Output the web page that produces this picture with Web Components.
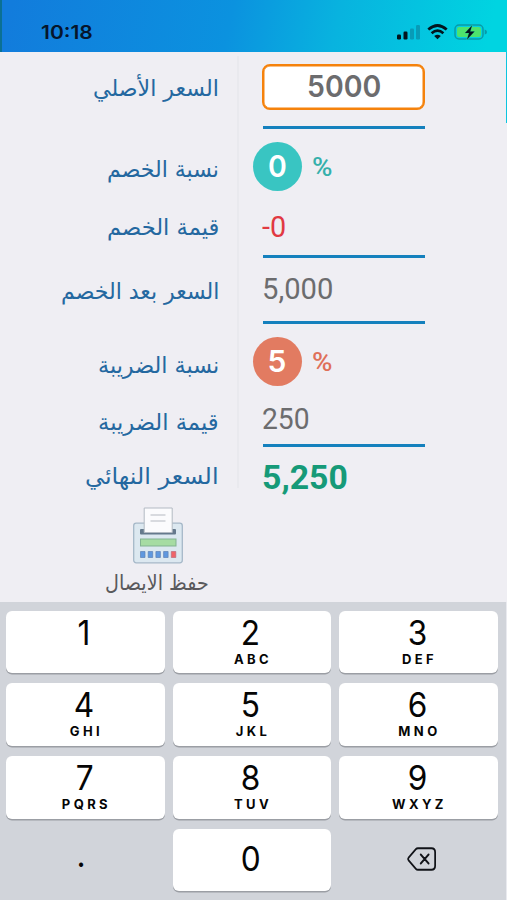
<!DOCTYPE html>
<html lang="ar">
<head>
<meta charset="utf-8">
<title>حاسبة الخصم والضريبة</title>
<style>
html,body{margin:0;height:900px;overflow:hidden;background:#efeef3}
</style>
</head>
<body>
<discount-app></discount-app>
<script>
const make = (name, html, ready) => customElements.define(name, class extends HTMLElement {
  connectedCallback() {
    if (this.shadowRoot) return;
    const t = document.createElement('template');
    t.innerHTML = typeof html === 'function' ? html(this) : html;
    this.attachShadow({mode: 'open'}).append(t.content.cloneNode(true));
    if (ready) ready(this);
  }
});

/* Text squeezed or stretched to the width given in its "w" attribute. */
make('fit-text', el => `<style>
:host{display:flex;width:${el.getAttribute('w')}px;white-space:nowrap;flex:none}
span{flex:none;transform-origin:0 50%}
</style><span><slot></slot></span>`, el => {
  const s = el.shadowRoot.querySelector('span');
  const k = +el.getAttribute('w') / s.offsetWidth;
  s.style.transform = `scaleX(${k})`;
});

make('status-bar', `<style>
:host{display:flex;box-sizing:border-box;height:52px;padding:12px 19px 0 39px;justify-content:space-between;align-items:center;
background:linear-gradient(102deg,#127cdc 2%,#0b92df 45%,#08b3df 66%,#00d4e1 96%);color:#06152b;font:600 19px Inter,sans-serif;border-left:2px solid #0b7093}
svg{display:block}
</style><fit-text w="52">10:18</fit-text>
<svg width="92" height="20" viewBox="0 0 92 20">
<g fill="#03151e"><rect x="1" y="12.5" width="4" height="5" rx="1.2"/><rect x="7.5" y="9.5" width="4" height="8" rx="1.2"/></g>
<g fill="#0a91ad"><rect x="14" y="6.5" width="4" height="11" rx="1.2" opacity=".8"/><rect x="20" y="3" width="4" height="14.500" rx="1.2" opacity=".8"/></g>
<g fill="none" stroke="#03151e" stroke-width="2.700"><path d="M32.300 7.600Q41.500-.6 50.700 7.600"/><path d="M35.600 11.200Q41.500 6.100 47.400 11.200"/></g><path d="M38.200 14Q41.500 11.300 44.800 14L41.500 17.300Z" fill="#03151e"/>
<rect x="59" y="3" width="28" height="14" rx="4" fill="none" stroke="#089aa8" stroke-width="1.500"/><rect x="61" y="5" width="24" height="10" rx="2.300" fill="#4de36c"/><path d="M88.700 7.400Q91 8 91 10t-2.300 2.600z" fill="#089aa8"/>
<path d="M76 3.500L69 11h4l-2 6.500 7.500-8h-4.300z" fill="#03151e" stroke="#2fc78b" stroke-width="1" paint-order="stroke"/>
</svg>`);

make('price-row', el => {
  const a = n => el.getAttribute(n);
  return `<style>
:host{display:grid;grid-template-columns:219px 1fr;column-gap:43px;box-sizing:border-box;height:${a('h')}px;padding-bottom:${a('pb') || 0}px;align-items:center;width:424.500px;${el.hasAttribute('line') ? 'border-bottom:3px solid #1480bd;border-image:linear-gradient(90deg,transparent 262px,#1480bd 262px) 1' : ''}}
.l{display:flex;justify-content:flex-end;direction:ltr;color:#2468a0;font:23px/30px "DejaVu Sans",sans-serif;padding-top:${a('drop') || 0}px}
.v{display:flex;align-items:center}
</style><div class="l"><fit-text w="${a('w')}">${a('label')}</fit-text></div><div class="v"><slot></slot></div>`;
});

make('price-input', `<style>
:host{display:flex;box-sizing:border-box;width:163px;height:46px;border:2.500px solid #f5820c;border-width:2.500px;border-radius:8px;background:#fff;justify-content:center;align-items:center;color:#6c6c6e;font:600 30px/40px Inter,sans-serif;box-shadow:inset 0 0 0 .5px #f5820c}
fit-text{margin-top:-2px}
</style><fit-text w="74"><slot></slot></fit-text>`);

make('percent-badge', `<style>
:host{display:flex;align-items:center;gap:10px;margin-left:-9.500px;font:500 25px/30px Roboto,sans-serif}
b{display:flex;width:49px;height:49px;border-radius:50%;background:var(--c);align-items:center;justify-content:center;color:#fff;font:600 30px/47px Inter,sans-serif}
i{font-style:normal;color:var(--t);padding-top:3px}
</style><b><fit-text w="19"><slot></slot></fit-text></b><i><fit-text w="20">%</fit-text></i>`);

make('amount-text', el => `<style>
:host{display:block;font:${el.getAttribute('wt') || 400} ${el.getAttribute('fs') || 30}px/36px Roboto,sans-serif;color:${el.getAttribute('color') || '#6c6c6e'}}
</style><fit-text w="${el.getAttribute('w')}"><slot></slot></fit-text>`);

make('save-receipt', `<style>
:host{display:flex;flex-direction:column;align-items:center;width:104px;margin:2px 0 0 105px;color:#59595c;font:21px/26px "DejaVu Sans",sans-serif}
svg{display:block;margin:0 0 6px 2px}
</style><svg width="50" height="57" viewBox="0 0 50 57">
<rect x=".7" y="16.200" width="48.600" height="39.600" rx="2.500" fill="#dce8f0" stroke="#a6b8c8" stroke-width="1.300"/>
<rect x="7" y="22" width="36" height="5.500" rx="1" fill="#65798c"/>
<path d="M11.200 1h28v24.500h-28z" fill="#fbfbfd" stroke="#b3bac3"/>
<path d="M17.500 8h15M17.500 14h15" stroke="#b6bac1" stroke-width="1.200"/>
<rect x="7.500" y="32" width="35.500" height="7" fill="#a6dca3" stroke="#83b391"/>
<g fill="#5f98df" stroke="#5d81b4" stroke-width=".7"><path d="M7.500 44.500h4.500v6h-4.500zM15.200 44.500h4.500v6h-4.500zM22.900 44.500h4.500v6h-4.500zM30.600 44.500h4.500v6h-4.500z"/><path d="M38.300 44.500h4.500v6h-4.500z" fill="#f06469" stroke="#b96b7b"/></g>
</svg><fit-text w="104">حفظ الايصال</fit-text>`);

make('key-cap', el => `<style>
:host{display:flex;flex-direction:column;align-items:center;box-sizing:border-box;border-radius:6px;color:#050505;font:400 34px/38px Inter,sans-serif;padding-top:3px;
${el.hasAttribute('flat') ? '' : 'background:#fff;box-shadow:0 1.500px 0 #9b9ea4;'}${el.hasAttribute('mid') ? 'justify-content:center;padding:0 0 2px;' : ''}}
span{transform:scaleX(.93);margin-right:2px}
small{font:700 13px/14px Inter,sans-serif;letter-spacing:3.400px;margin:0 -2.400px 0 0}
</style><span><slot></slot></span>${el.hasAttribute('sub') ? `<small>${el.getAttribute('sub')}</small>` : ''}`);

make('number-pad', `<style>
:host{display:grid;box-sizing:border-box;height:298px;grid-template-columns:repeat(3,158.500px);grid-template-rows:62px 63px 63px 62px;column-gap:8px;row-gap:10px;padding:9px 0 0 6px;background:#d1d4da;border-right:1.500px solid #e9eaef}
svg{display:block;margin-left:10px}
.dot{display:block;margin:-8px 7px 0 0}
</style>
<key-cap>1</key-cap><key-cap sub="ABC">2</key-cap><key-cap sub="DEF">3</key-cap>
<key-cap sub="GHI">4</key-cap><key-cap sub="JKL">5</key-cap><key-cap sub="MNO">6</key-cap>
<key-cap sub="PQRS">7</key-cap><key-cap sub="TUV">8</key-cap><key-cap sub="WXYZ">9</key-cap>
<key-cap flat mid><span class="dot">.</span></key-cap><key-cap mid>0</key-cap>
<key-cap flat mid><svg width="32" height="24" viewBox="0 0 32 24" fill="none" stroke="#111318" stroke-width="1.900" stroke-linecap="round" stroke-linejoin="round"><path d="M12 1.200h14.500q4 0 4 4v13.600q0 4-4 4H12q-1.300 0-2.200-1L2 13.300q-1.200-1.300 0-2.600L9.800 2.200Q10.700 1.200 12 1.200zM15 7.500l8.500 9M23.500 7.500l-8.500 9"/></svg></key-cap>`);

make('discount-app', `<style>
:host{display:flex;flex-direction:column;width:507px;height:900px;background:#efeef3;overflow:hidden}
main{height:550px;display:flex;flex-direction:column;background:
linear-gradient(#0cc5df,#0cc5df) 506px 0/1px 71px no-repeat,
linear-gradient(#e9e9ee,#e9e9ee) 237px 4px/2px 432px no-repeat}
</style>
<status-bar></status-bar>
<main>
<price-row h="77" pb="4" line w="126" drop="2" label="السعر الأصلي"><price-input>5000</price-input></price-row>
<price-row h="75" w="112" drop="5" label="نسبة الخصم"><percent-badge style="--c:#39c5c2;--t:#35b0ab">0</percent-badge></price-row>
<price-row h="53.5" pb="5" line w="112" label="قيمة الخصم"><amount-text w="24" color="#e13942">-0</amount-text></price-row>
<price-row h="66.5" pb="0" line w="158" drop="4" label="السعر بعد الخصم"><amount-text w="71">5,000</amount-text></price-row>
<price-row h="75" w="121" drop="7" label="نسبة الضريبة"><percent-badge style="--c:#e27b61;--t:#df7059">5</percent-badge></price-row>
<price-row h="48" pb="5" line w="121" drop="6" label="قيمة الضريبة"><amount-text w="48">250</amount-text></price-row>
<price-row h="58" w="134" label="السعر النهائي"><amount-text w="86" fs="33" wt="700" color="#169a78" style="padding-top:3px">5,250</amount-text></price-row>
<save-receipt></save-receipt>
</main>
<number-pad></number-pad>`);
</script>
</body>
</html>
